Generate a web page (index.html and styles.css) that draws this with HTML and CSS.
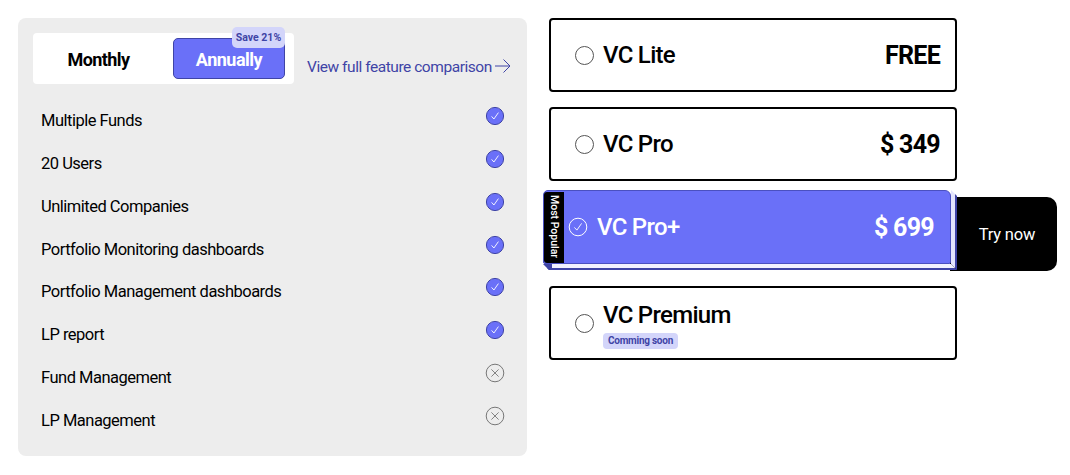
FILE: index.html
```html
<!DOCTYPE html>
<html lang="en">
<head>
<meta charset="utf-8">
<title>Plans</title>
<link rel="stylesheet" href="styles.css">
</head>
<body>
<svg class="defs" width="0" height="0" aria-hidden="true">
  <symbol id="yes" viewBox="0 0 20 20"><circle cx="10" cy="10" r="8.6" fill="#6a70f8" stroke="#3f44a6" stroke-width="1"/><path d="M6.6 10.400l2.300 2.600 4.500-6.400" fill="none" stroke="#fff" stroke-width=".9"/></symbol>
  <symbol id="no" viewBox="0 0 20 20"><circle cx="10" cy="10" r="8.8" fill="none" stroke="#777" stroke-width="1"/><path d="M6.400 6.400l7.200 7.200M13.600 6.400l-7.200 7.200" fill="none" stroke="#777" stroke-width=".9"/></symbol>
</svg>
<main class="page">
  <section class="panel">
    <div class="top">
      <div class="toggle">
        <button class="opt">Monthly</button>
        <button class="opt opt-on">Annually<span class="save">Save 21%</span></button>
      </div>
      <a class="compare" href="#">View full feature comparison
        <svg class="arrow" viewBox="0 0 16 14" width="16" height="14"><path d="M0 7h15M8.500 .5L15 7l-6.500 6.500" fill="none" stroke="#3f44a6" stroke-width="1"/></svg>
      </a>
    </div>
    <ul class="features">
      <li>Multiple Funds<svg class="ic"><use href="#yes"/></svg></li>
      <li>20 Users<svg class="ic"><use href="#yes"/></svg></li>
      <li>Unlimited Companies<svg class="ic"><use href="#yes"/></svg></li>
      <li>Portfolio Monitoring dashboards<svg class="ic"><use href="#yes"/></svg></li>
      <li>Portfolio Management dashboards<svg class="ic"><use href="#yes"/></svg></li>
      <li>LP report<svg class="ic"><use href="#yes"/></svg></li>
      <li>Fund Management<svg class="ic"><use href="#no"/></svg></li>
      <li>LP Management<svg class="ic"><use href="#no"/></svg></li>
    </ul>
  </section>
  <section class="plans">
    <div class="plan"><span class="radio"></span><span class="name">VC Lite</span><span class="price">FREE</span></div>
    <div class="plan"><span class="radio"></span><span class="name">VC Pro</span><span class="price">$ 349</span></div>
    <div class="chosen-wrap">
      <a class="try" href="#">Try now</a>
      <div class="chosen">
        <span class="tag"><span class="tag-text">Most Popular</span></span>
        <svg class="tick" viewBox="0 0 20 20" width="20" height="20"><circle cx="10" cy="10" r="8.800" fill="none" stroke="#fff" stroke-width="1"/><path d="M6.400 10.400l2.500 2.700 4.700-6.700" fill="none" stroke="#fff" stroke-width=".9"/></svg>
        <span class="name">VC Pro+</span><span class="price">$ 699</span>
      </div>
    </div>
    <div class="plan"><span class="radio"></span>
      <div class="stack"><span class="name">VC Premium</span><span class="soon">Comming soon</span></div>
    </div>
  </section>
</main>
</body>
</html>
```
FILE: styles.css
```css
* { box-sizing: border-box; }
html, body { margin: 0; padding: 0; background: #fff; }
body { font-family: Roboto, "Liberation Sans", sans-serif; color: #000; }
.defs { position: absolute; }
.page { display: flex; gap: 22px; padding: 18px; height: 475px; }
.panel { width: 509px; height: 438px; background: #ededed; border-radius: 8px; padding: 15px 15px 0; }
.top { display: flex; align-items: flex-start; }
.toggle { width: 261px; height: 51px; background: #fff; border-radius: 4px; display: flex; padding: 5px 9px 5px 0; }
.opt { border: 0; background: none; font: 700 18px Roboto, sans-serif; letter-spacing: -0.6px; color: #000; padding: 2px 9px 0 0; width: 140px; }
.opt-on { position: relative; width: 112px; height: 41px; background: #6a70f8; border: 1px solid #3f44a6; border-radius: 5px; color: #fff; letter-spacing: -0.5px; padding: 2px 0 0; }
.save { position: absolute; top: -12px; right: -1px; width: 53px; height: 21px; background: #d3d5fa; color: #3f44a6; font-size: 10.500px; font-weight: 700; letter-spacing: 0; line-height: 21px; border-radius: 5px; text-align: center; }
.compare { margin: 24px 0 0 13px; display: flex; align-items: center; gap: 3px; color: #3f44a6; font-size: 15.500px; letter-spacing: -0.45px; line-height: 20px; text-decoration: none; white-space: nowrap; }
.arrow { flex: none; margin-top: -3px; }
.features { list-style: none; margin: 15px 0 0; padding: 0 7px 0 8px; }
.features li { display: flex; justify-content: space-between; height: 42.850px; padding-top: 7px; font-size: 16.500px; letter-spacing: -0.5px; line-height: 30px; font-weight: 400; }
.ic { width: 20px; height: 20px; flex: none; }
.plans { width: 408px; display: flex; flex-direction: column; align-items: stretch; }
.plan { height: 74px; border: 2px solid #000; border-radius: 4px; display: flex; align-items: center; padding: 0 15px 0 24px; margin-bottom: 15px; background: #fff; }
.radio { width: 19px; height: 19px; border: 1px solid #555; border-radius: 50%; flex: none; margin-right: 9px; }
.name { font-size: 24px; letter-spacing: -0.7px; font-weight: 500; flex: 1; }
.price { font-size: 25px; letter-spacing: -0.7px; font-weight: 700; }
.stack { display: flex; flex-direction: column; align-items: flex-start; margin-top: 3px; }
.stack .name { flex: none; line-height: 30px; }
.soon { background: #d3d5fa; color: #3f44a6; font-size: 10px; font-weight: 700; letter-spacing: -0.25px; line-height: 16px; padding: 0 5px; border-radius: 4px; margin-top: 3px; }
.chosen-wrap { position: relative; height: 80px; margin: -6px 0 16px -6px; width: 414px; }
.chosen { position: relative; width: 408px; height: 74px; background: #6a70f8; border: 1px solid #4a50c0; border-radius: 5px 6px 2px 2px; display: flex; align-items: center; color: #fff; padding-right: 16px; }
.chosen::before { content: ""; position: absolute; left: -1px; right: -7px; top: 73px; height: 6px; background: linear-gradient(#3f44a6, #3f44a6) left / 9px 100% no-repeat, linear-gradient(#f2f2ff 0 4px, #3f44a6 4px); clip-path: polygon(0 0, 408px 0, 100% 100%, 6px 100%); }
.chosen::after { content: ""; position: absolute; left: 407px; top: -1px; width: 6px; height: 80px; background: linear-gradient(90deg, #e4e5fd 0 4px, #3f44a6 4px); clip-path: polygon(0 0, 100% 6px, 100% 100%, 0 74px); }
.tag { width: 20px; height: 71px; background: #000; flex: none; display: flex; align-items: center; justify-content: center; border-radius: 3px 0 0 3px; }
.tag-text { writing-mode: vertical-rl; color: #fff; font-size: 10.500px; font-weight: 500; white-space: nowrap; }
.tick { flex: none; margin: 0 9px 0 4px; }
.try { position: absolute; left: 407px; top: 7px; width: 107px; height: 74px; padding-left: 7px; background: #000; color: #fff; border-radius: 0 10px 10px 0; display: flex; align-items: center; justify-content: center; font-size: 16.500px; letter-spacing: -0.2px; font-weight: 400; text-decoration: none; }
```
